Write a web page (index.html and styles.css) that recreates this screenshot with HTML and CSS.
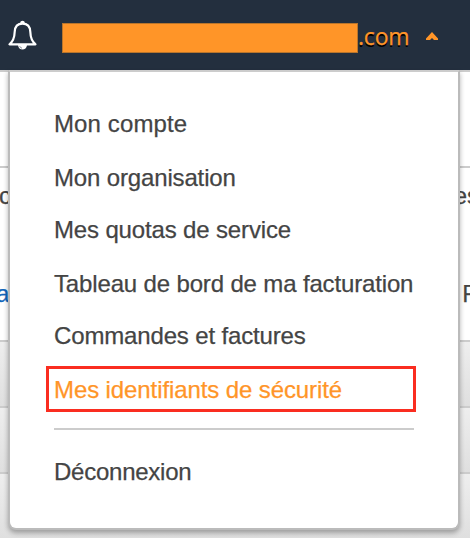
FILE: index.html
```html
<!DOCTYPE html>
<html lang="fr">
<head>
<meta charset="utf-8">
<title>Menu du compte</title>
<link rel="stylesheet" href="styles.css">
</head>
<body>
<header class="topbar">
  <svg class="bell" width="30" height="32" viewBox="0 0 30 32" fill="none" stroke="#fff" stroke-width="2.2" stroke-linejoin="round">
    <path d="M13 4a1.600 1.600 0 0 1 3 0" fill="#fff"/>
    <path d="M14.500 4.600c-5 0-7.600 3.200-7.800 8.200-.2 6.300-1.200 9.400-5.200 12.500h26c-4-3.100-5-6.200-5.200-12.500-.2-5-2.800-8.200-7.800-8.200z"/>
    <path d="M10 26c.4 6 8.600 6 9 0z" fill="#fff" stroke="none"/>
    <path d="M11.800 27.200c.2 1 1 1.700 2.200 1.900" stroke="#7b838f" stroke-width="1"/>
  </svg>
  <span class="redacted"></span>
  <span class="domain">.com</span>
  <svg class="caret" width="12" height="8" viewBox="0 0 12 8"><path d="M0 8V6.600L6 0l6 6.600V8H8L6 6 4 8z" fill="#ff9528"/></svg>
</header>
<main class="page">
  <section class="band blank"></section>
  <section class="band content">
    <div class="line first"><span>c</span><span class="right">es</span></div>
    <div class="line second"><a>a</a><span class="right">F</span></div>
  </section>
  <section class="band shaded"></section>
  <section class="band shaded"></section>
  <section class="band shaded"></section>
  <nav class="menu">
    <a class="item account">Mon compte</a>
    <a class="item organisation">Mon organisation</a>
    <a class="item quotas">Mes quotas de service</a>
    <a class="item billing">Tableau de bord de ma facturation</a>
    <a class="item orders">Commandes et factures</a>
    <a class="item active">Mes identifiants de sécurité</a>
    <hr class="separator">
    <a class="item logout">Déconnexion</a>
  </nav>
</main>
</body>
</html>
```
FILE: styles.css
```css
* {
  box-sizing: border-box;
}

body {
  margin: 0;
  width: 470px;
  height: 538px;
  overflow: hidden;
  background: #fff;
  color: #444;
  font: 24px/28px "Liberation Sans", Arial, sans-serif;
  -webkit-text-stroke: .25px currentColor;
}

.topbar {
  display: flex;
  align-items: center;
  height: 70px;
  padding: 0 0 0 8px;
  background: #232f3e;
}

.redacted {
  width: 296px;
  height: 30px;
  margin: 6px 0 0 24px;
  border: 1px solid #b8752c;
  background: #ff9528;
}

.domain {
  width: 54px;
  margin-top: 1px;
  color: #ff9528;
  font-family: "Open Sans", sans-serif;
  font-size: 23px;
  letter-spacing: -.2px;
  text-shadow: 0 2px 0 #000;
}

.caret {
  margin: 2px 0 0 14px;
}

.page {
  position: relative;
  height: 468px;
}

.band {
  height: 66px;
  border-top: 2px solid #ccc;
}

.blank {
  height: 96px;
}

.content {
  height: 174px;
}

.shaded {
  background: linear-gradient(#eee, #dfdfdf);
}

.line {
  display: flex;
  justify-content: space-between;
}

.first {
  margin: 14px -9px 0 -1px;
}

.second {
  margin: 70px -7px 0 -4px;
}

.line a {
  color: #1166bb;
}

.menu {
  position: absolute;
  top: 0;
  left: 8px;
  display: flex;
  flex-direction: column;
  width: 452px;
  height: 460px;
  padding: 38px 44px 0;
  border: 2px solid #bbb;
  border-top-color: #ccc;
  border-radius: 0 0 8px 8px;
  background: #fff;
  box-shadow: 0 3px 5px rgba(0, 0, 0, .3);
}

.item {
  height: 28px;
  margin-bottom: 25px;
  letter-spacing: -.15px;
  white-space: nowrap;
}

.account {
  letter-spacing: .12px;
}

.organisation,
.billing,
.active {
  margin-top: 1px;
}

.quotas,
.orders {
  margin-top: -1px;
}

.active {
  width: 370px;
  height: 46px;
  margin: -9px 0 0 -8px;
  padding: 7px 5px;
  border: 3px solid #fa2d20;
  color: #ff9528;
  letter-spacing: -.1px;
}

.separator {
  width: 360px;
  height: 2px;
  margin: 16px 0 28px;
  border: 0;
  background: #ccc;
}

.logout {
  margin: 0;
  letter-spacing: -.25px;
}
```
